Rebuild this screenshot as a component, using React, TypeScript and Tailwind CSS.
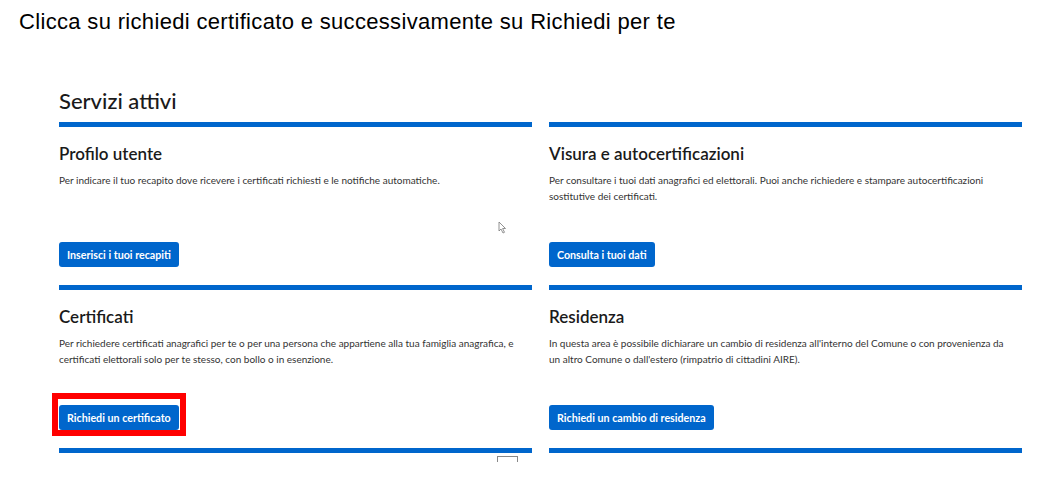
import React from 'react';

const cards = [
  {
    title: 'Profilo utente',
    text: 'Per indicare il tuo recapito dove ricevere i certificati richiesti e le notifiche automatiche.',
    button: 'Inserisci i tuoi recapiti',
  },
  {
    title: 'Visura e autocertificazioni',
    text: 'Per consultare i tuoi dati anagrafici ed elettorali. Puoi anche richiedere e stampare autocertificazioni sostitutive dei certificati.',
    button: 'Consulta i tuoi dati',
  },
  {
    title: 'Certificati',
    text: 'Per richiedere certificati anagrafici per te o per una persona che appartiene alla tua famiglia anagrafica, e certificati elettorali solo per te stesso, con bollo o in esenzione.',
    button: 'Richiedi un certificato',
    highlight: true,
  },
  {
    title: 'Residenza',
    text: "In questa area è possibile dichiarare un cambio di residenza all'interno del Comune o con provenienza da un altro Comune o dall'estero (rimpatrio di cittadini AIRE).",
    button: 'Richiedi un cambio di residenza',
  },
];

const ServiceCard = ({ title, text, button, highlight }: { title: string; text: string; button: string; highlight?: boolean }) => (
  <div className="h-[163px] border-t-[5px] border-[#0066cc] pt-[17px] pb-[18px] flex flex-col">
    <h3 className="text-[17px] leading-[20px] font-semibold text-[#1a1a1a]">{title}</h3>
    <p className="mt-[8px] text-[10px] leading-[16px] text-[#333] pr-[10px]">{text}</p>
    <div className="mt-auto">
      <div className="relative inline-block">
        {/* red annotation box */}
        {highlight && <div className="absolute -left-[7px] -top-[11px] -right-[7px] -bottom-[6px] border-[6px] border-[#ff0000]" />}
        <button className="relative h-[25px] px-[8px] rounded-[3px] bg-[#0066cc] text-white text-[10.7px] font-bold leading-[25px]">
          {button}
        </button>
      </div>
    </div>
  </div>
);

export default function App() {
  return (
    <div className="w-[1043px] h-[499px] bg-white overflow-hidden" style={{ fontFamily: 'Lato, "Open Sans", sans-serif' }}>
      <p
        className="pl-[19px] pt-[9px] text-[22px] leading-[25px] tracking-[0.33px] text-black"
        style={{ fontFamily: '"Liberation Sans", Arial, sans-serif' }}
      >
        Clicca su richiedi certificato e successivamente su Richiedi per te
      </p>

      <div className="relative ml-[59px] w-[963px] mt-[53px]">
        <h2 className="text-[22px] leading-[28px] text-[#1a1a1a] font-medium">Servizi attivi</h2>
        <div className="mt-[7px] grid grid-cols-2 gap-x-[17px]">
          {cards.map((c) => (
            <ServiceCard key={c.title} {...c} />
          ))}
          <div className="h-[5px] bg-[#0066cc]" />
          <div className="h-[5px] bg-[#0066cc]" />
        </div>

        {/* mouse cursor */}
        <svg className="absolute left-[439px] top-[134px]" width="9" height="13" viewBox="0 0 9 13">
          <path d="M1 1 L1 10 L3 8 L5 12 L6.5 11.3 L4.6 7.5 L7.5 7.5 Z" fill="white" stroke="#777" strokeWidth="0.8" />
        </svg>
        {/* small outlined box at the bottom */}
        <div className="absolute left-[438px] top-[369px] w-[21px] h-[6px] border border-b-0 border-[#888]" />
      </div>
    </div>
  );
}
